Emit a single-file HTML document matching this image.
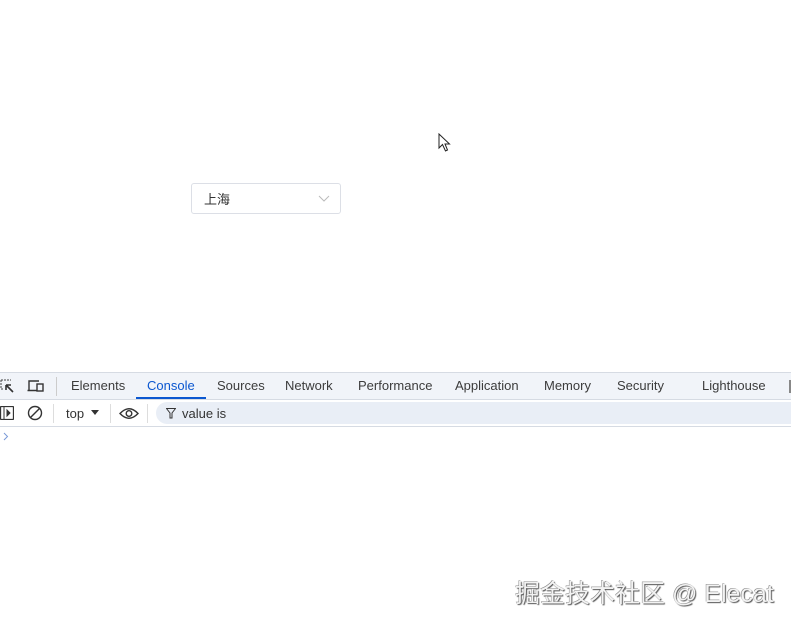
<!DOCTYPE html>
<html><head><meta charset="utf-8"><style>
body{margin:0;width:791px;height:624px;background:#fff;position:relative;overflow:hidden;font-family:"Liberation Sans","Noto Sans CJK SC",sans-serif}
.sel{position:absolute;left:191px;top:183px;width:150px;height:31px;border:1px solid #dcdfe6;border-radius:3px;box-sizing:border-box}
.sel span{position:absolute;left:12px;top:5px;font-size:13px;color:#333}
.tabs{position:absolute;left:0;top:372px;width:791px;height:28px;background:#f1f4f9;border-top:1px solid #d6dbe3;border-bottom:1px solid #d6dbe3;box-sizing:border-box}
.tab{position:absolute;top:5px;font-size:13px;color:#3c3c3c}
.bar{position:absolute;left:0;top:400px;width:791px;height:27px;border-bottom:1px solid #d6dbe3;box-sizing:border-box;background:#fff}
.t{position:absolute;font-size:13px;color:#333}
.wm{position:absolute;left:515px;top:574px;font-size:25px;color:#f3f3f3;text-shadow:1px 1px 1px #555,-0.5px -0.5px 0 #888}
</style></head><body>
<div class="sel"><span>上海</span>
<svg style="position:absolute;left:126px;top:11px" width="12" height="8"><path d="M1 1L6 6L11 1" stroke="#bbb" fill="none"/></svg></div>
<svg style="position:absolute;left:438px;top:133px" width="14" height="20"><path d="M1 1L1 15L4.5 11.5L7.5 18L9.5 17L7 11L11.5 11Z" fill="#fff" stroke="#222" stroke-width="1"/></svg>
<div class="tabs">
<svg style="position:absolute;left:0;top:6px" width="16" height="14"><path d="M1 1h10M1 1v9M1 10h3" stroke="#444" stroke-dasharray="2 1" fill="none"/><path d="M6 6l7 7M6 6h5M6 6v5" stroke="#333" stroke-width="1.6" fill="none"/></svg>
<svg style="position:absolute;left:27px;top:6px" width="18" height="14"><path d="M2 11V2h10M0.5 11.5h9" stroke="#333" stroke-width="1.4" fill="none"/><rect x="10" y="5" width="6" height="7" stroke="#333" stroke-width="1.4" fill="none"/></svg>
<div style="position:absolute;left:56px;top:4px;width:1px;height:19px;background:#ccc"></div>
<span class="tab" style="left:71px">Elements</span>
<span class="tab" style="left:147px;color:#0b57d0">Console</span>
<div style="position:absolute;left:136px;top:24px;width:70px;height:2px;background:#0b57d0"></div>
<span class="tab" style="left:217px">Sources</span>
<span class="tab" style="left:285px">Network</span>
<span class="tab" style="left:358px">Performance</span>
<span class="tab" style="left:455px">Application</span>
<span class="tab" style="left:544px">Memory</span>
<span class="tab" style="left:617px">Security</span>
<span class="tab" style="left:702px">Lighthouse</span>
<div style="position:absolute;left:789px;top:7px;width:2px;height:13px;background:#888"></div>
</div>
<div class="bar">
<svg style="position:absolute;left:0;top:6px" width="14" height="14"><rect x="0.5" y="0.5" width="13" height="13" rx="1" stroke="#333" fill="none" stroke-width="1.3"/><path d="M4 1v12M7 4l3 3-3 3z" stroke="#333" fill="#333"/></svg>
<svg style="position:absolute;left:27px;top:5px" width="16" height="16"><circle cx="8" cy="8" r="6.5" stroke="#333" stroke-width="1.4" fill="none"/><path d="M3.5 12.5L12.5 3.5" stroke="#333" stroke-width="1.4"/></svg>
<div style="position:absolute;left:53px;top:4px;width:1px;height:19px;background:#ddd"></div>
<span class="t" style="left:66px;top:6px">top</span>
<svg style="position:absolute;left:91px;top:10px" width="8" height="6"><path d="M0 0h8L4 5z" fill="#333"/></svg>
<div style="position:absolute;left:110px;top:4px;width:1px;height:19px;background:#ddd"></div>
<svg style="position:absolute;left:119px;top:7px" width="20" height="13"><path d="M1 6.5Q10 -3 19 6.5Q10 16 1 6.5Z" stroke="#333" stroke-width="1.4" fill="none"/><circle cx="10" cy="6.5" r="2.8" stroke="#333" stroke-width="1.4" fill="none"/></svg>
<div style="position:absolute;left:147px;top:4px;width:1px;height:19px;background:#ddd"></div>
<div style="position:absolute;left:156px;top:2px;width:640px;height:22px;background:#e9eef6;border-radius:11px 0 0 11px"></div>
<svg style="position:absolute;left:166px;top:8px" width="10" height="11"><path d="M0.5 0.5h9L6 5v5H4V5z" stroke="#333" fill="none"/></svg>
<span class="t" style="left:182px;top:6px">value is</span>
</div>
<svg style="position:absolute;left:3px;top:432px" width="6" height="9"><path d="M1 1l3.5 3.5L1 8" stroke="#7a9ad8" fill="none"/></svg>
<div class="wm">掘金技术社区 @ Elecat</div>
</body></html>
